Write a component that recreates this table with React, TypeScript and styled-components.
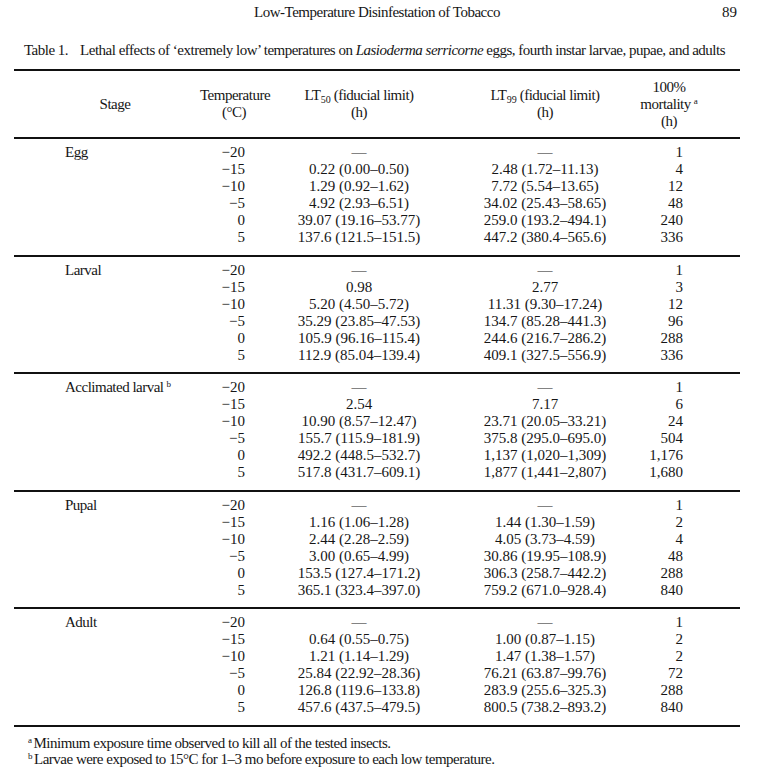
import React from "react";
import styled, { createGlobalStyle } from "styled-components";

const Global = createGlobalStyle`
  html, body { margin: 0; padding: 0; background: #ffffff; }
  body { font-family: "Liberation Serif", "Times New Roman", serif; color: #161616; }
`;

const Page = styled.div`
  width: 757px;
  box-sizing: border-box;
  padding: 4px 17px 0 14px;
  font-size: 15px;
  line-height: 17px;
  letter-spacing: -0.5px;
`;

const RunningHead = styled.div`
  display: grid;
  grid-template-columns: 1fr auto 1fr;
  align-items: center;
  height: 17px;
`;

const HeadTitle = styled.div`
  grid-column: 2;
  text-align: center;
`;

const PageNo = styled.div`
  grid-column: 3;
  text-align: right;
  padding-right: 3px;
  letter-spacing: 0;
`;

const Caption = styled.div`
  margin-top: 21px;
  padding-left: 10px;
  white-space: nowrap;
`;

const CaptionLabel = styled.span`
  margin-right: 12px;
`;

const Table = styled.div`
  margin-top: 10px;
  width: 726px;
  border-top: 2px solid #111;
`;

const Row = styled.div`
  display: grid;
  grid-template-columns: 186px 68px 182px 190px 58px 42px;
  line-height: 17px;
`;

const HeaderRow = styled(Row)`
  align-items: center;
  height: 66px;
  border-bottom: 2px solid #111;
`;

const HeadCell = styled.div<{ $pl?: number }>`
  text-align: center;
  white-space: nowrap;
  padding-left: ${(p) => p.$pl ?? 0}px;
`;

const Group = styled.div`
  padding: 5px 0 8.6px;
  border-bottom: 2px solid #111;
`;

const StageCell = styled.div`
  padding-left: 51px;
  white-space: nowrap;
`;

const TempCell = styled.div`
  text-align: right;
  padding-right: 23px;
  letter-spacing: 0;
`;

const ValueCell = styled.div`
  text-align: center;
  white-space: nowrap;
  letter-spacing: 0;
`;

const MortCell = styled.div`
  text-align: right;
  padding-right: 15px;
  letter-spacing: 0;
`;

const Sub = styled.sub`
  font-size: 10px;
  letter-spacing: -0.2px;
  line-height: 0;
  vertical-align: -3px;
  margin-left: 0.5px;
`;

const Sup = styled.sup`
  font-size: 9px;
  letter-spacing: 0;
  line-height: 0;
  vertical-align: 5px;
  margin-left: 3px;
`;

const Footnotes = styled.div`
  margin-top: 8px;
  padding-left: 14px;
  line-height: 16px;
`;

const NoteSup = styled.sup`
  font-size: 9px;
  letter-spacing: 0;
  line-height: 0;
  vertical-align: 5px;
  margin-right: 1.5px;
`;

type GroupData = { stage: React.ReactNode; rows: [string, string, string, string][] };

const M = "\u2212";

const groups: GroupData[] = [
  {
    stage: "Egg",
    rows: [
      [M + "20", "—", "—", "1"],
      [M + "15", "0.22 (0.00–0.50)", "2.48 (1.72–11.13)", "4"],
      [M + "10", "1.29 (0.92–1.62)", "7.72 (5.54–13.65)", "12"],
      [M + "5", "4.92 (2.93–6.51)", "34.02 (25.43–58.65)", "48"],
      ["0", "39.07 (19.16–53.77)", "259.0 (193.2–494.1)", "240"],
      ["5", "137.6 (121.5–151.5)", "447.2 (380.4–565.6)", "336"],
    ],
  },
  {
    stage: "Larval",
    rows: [
      [M + "20", "—", "—", "1"],
      [M + "15", "0.98", "2.77", "3"],
      [M + "10", "5.20 (4.50–5.72)", "11.31 (9.30–17.24)", "12"],
      [M + "5", "35.29 (23.85–47.53)", "134.7 (85.28–441.3)", "96"],
      ["0", "105.9 (96.16–115.4)", "244.6 (216.7–286.2)", "288"],
      ["5", "112.9 (85.04–139.4)", "409.1 (327.5–556.9)", "336"],
    ],
  },
  {
    stage: (
      <>
        Acclimated larval<Sup>b</Sup>
      </>
    ),
    rows: [
      [M + "20", "—", "—", "1"],
      [M + "15", "2.54", "7.17", "6"],
      [M + "10", "10.90 (8.57–12.47)", "23.71 (20.05–33.21)", "24"],
      [M + "5", "155.7 (115.9–181.9)", "375.8 (295.0–695.0)", "504"],
      ["0", "492.2 (448.5–532.7)", "1,137 (1,020–1,309)", "1,176"],
      ["5", "517.8 (431.7–609.1)", "1,877 (1,441–2,807)", "1,680"],
    ],
  },
  {
    stage: "Pupal",
    rows: [
      [M + "20", "—", "—", "1"],
      [M + "15", "1.16 (1.06–1.28)", "1.44 (1.30–1.59)", "2"],
      [M + "10", "2.44 (2.28–2.59)", "4.05 (3.73–4.59)", "4"],
      [M + "5", "3.00 (0.65–4.99)", "30.86 (19.95–108.9)", "48"],
      ["0", "153.5 (127.4–171.2)", "306.3 (258.7–442.2)", "288"],
      ["5", "365.1 (323.4–397.0)", "759.2 (671.0–928.4)", "840"],
    ],
  },
  {
    stage: "Adult",
    rows: [
      [M + "20", "—", "—", "1"],
      [M + "15", "0.64 (0.55–0.75)", "1.00 (0.87–1.15)", "2"],
      [M + "10", "1.21 (1.14–1.29)", "1.47 (1.38–1.57)", "2"],
      [M + "5", "25.84 (22.92–28.36)", "76.21 (63.87–99.76)", "72"],
      ["0", "126.8 (119.6–133.8)", "283.9 (255.6–325.3)", "288"],
      ["5", "457.6 (437.5–479.5)", "800.5 (738.2–893.2)", "840"],
    ],
  },
];

export default function App() {
  return (
    <>
      <Global />
      <Page>
        <RunningHead>
          <HeadTitle>Low-Temperature Disinfestation of Tobacco</HeadTitle>
          <PageNo>89</PageNo>
        </RunningHead>
        <Caption>
          <CaptionLabel>Table 1.</CaptionLabel>
          Lethal effects of ‘extremely low’ temperatures on <i>Lasioderma serricorne</i> eggs, fourth instar larvae,
          pupae, and adults
        </Caption>
        <Table>
          <HeaderRow>
            <HeadCell $pl={16}>Stage</HeadCell>
            <HeadCell>
              Temperature
              <br />
              (°C)
            </HeadCell>
            <HeadCell>
              LT<Sub>50</Sub> (fiducial limit)
              <br />
              (h)
            </HeadCell>
            <HeadCell>
              LT<Sub>99</Sub> (fiducial limit)
              <br />
              (h)
            </HeadCell>
            <HeadCell>
              100%
              <br />
              mortality<Sup>a</Sup>
              <br />
              (h)
            </HeadCell>
          </HeaderRow>
          {groups.map((g, gi) => (
            <Group key={gi}>
              {g.rows.map((r, ri) => (
                <Row key={ri}>
                  <StageCell>{ri === 0 ? g.stage : ""}</StageCell>
                  <TempCell>{r[0]}</TempCell>
                  <ValueCell>{r[1]}</ValueCell>
                  <ValueCell>{r[2]}</ValueCell>
                  <MortCell>{r[3]}</MortCell>
                </Row>
              ))}
            </Group>
          ))}
        </Table>
        <Footnotes>
          <div>
            <NoteSup>a</NoteSup>Minimum exposure time observed to kill all of the tested insects.
          </div>
          <div>
            <NoteSup>b</NoteSup>Larvae were exposed to 15°C for 1–3 mo before exposure to each low temperature.
          </div>
        </Footnotes>
      </Page>
    </>
  );
}
